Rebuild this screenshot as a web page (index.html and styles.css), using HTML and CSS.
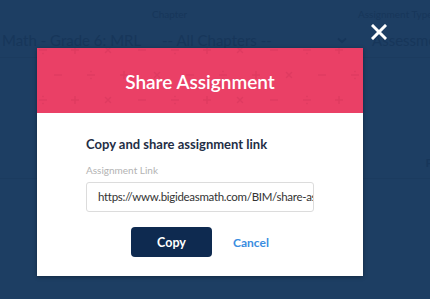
FILE: index.html
```html
<!DOCTYPE html>
<html lang="en">
<head>
    <meta charset="UTF-8">
    <meta name="viewport" content="width=device-width, initial-scale=1.0">
    <title>Share Assignment</title>
    <link rel="stylesheet" href="styles.css">
</head>
<body>

    <div class="page">
        <div class="filters">
            <div class="filter course">
                <span class="filter-label">&nbsp;</span>
                <div class="filter-select">
                    <span>Math - Grade 6: MRL</span>
                    <svg class="chev" width="10" height="7" viewBox="0 0 10 7"><path d="M1 1.5 L5 5 L9 1.5" fill="none" stroke="currentColor" stroke-width="1.8"/></svg>
                </div>
            </div>
            <div class="filter chapter">
                <span class="filter-label">Chapter</span>
                <div class="filter-select">
                    <span>-- All Chapters --</span>
                    <svg class="chev" width="10" height="7" viewBox="0 0 10 7"><path d="M1 1.5 L5 5 L9 1.5" fill="none" stroke="currentColor" stroke-width="1.8"/></svg>
                </div>
            </div>
            <div class="filter type">
                <span class="filter-label">Assignment Type</span>
                <div class="filter-select">
                    <span>Assessment</span>
                </div>
            </div>
        </div>
        <div class="list-row">
            <span class="list-head">P</span>
        </div>
    </div>

    <div class="overlay">
        <button class="close" aria-label="Close">
            <svg width="16" height="16" viewBox="0 0 16 16"><path d="M2 2 L14 14 M14 2 L2 14" stroke="#fff" stroke-width="3" stroke-linecap="square"/></svg>
        </button>

        <div class="modal">
            <div class="modal-head">
                <svg class="symbols" width="326" height="65">
                    <defs>
                        <pattern id="math" x="0" y="0" width="132" height="50" patternUnits="userSpaceOnUse">
                            <g stroke="#df3a60" stroke-width="1.5" fill="#df3a60">
                                <!-- row 1 : + x - / -->
                                <path d="M38 -2 v8 M34 2 h8"/>
                                <path d="M68 -1 l6 6 M74 -1 l-6 6"/>
                                <path d="M101 2 h8"/>
                                <path d="M2 2 h8"/>
                                <circle cx="6" cy="-1.5" r="0.9" stroke="none"/>
                                <circle cx="6" cy="5.5" r="0.9" stroke="none"/>
                                <!-- row 2 : - / + x -->
                                <path d="M17 27 h8"/>
                                <path d="M50 27 h8"/>
                                <circle cx="54" cy="23.5" r="0.9" stroke="none"/>
                                <circle cx="54" cy="30.5" r="0.9" stroke="none"/>
                                <path d="M87 23 v8 M83 27 h8"/>
                                <path d="M117 24 l6 6 M123 24 l-6 6"/>
                                <!-- wrap of row 1 -->
                                <path d="M38 48 v8 M34 52 h8"/>
                                <path d="M68 49 l6 6 M74 49 l-6 6"/>
                                <path d="M101 52 h8"/>
                                <path d="M2 52 h8"/>
                                <circle cx="6" cy="48.5" r="0.9" stroke="none"/>
                            </g>
                        </pattern>
                    </defs>
                    <rect width="326" height="65" fill="url(#math)"/>
                </svg>
                <h2>Share Assignment</h2>
            </div>
            <div class="modal-body">
                <h3>Copy and share assignment link</h3>
                <label class="field-label">Assignment Link</label>
                <div class="link-box">https://www.bigideasmath.com/BIM/share-assignment/8f21c</div>
                <div class="actions">
                    <button class="btn-copy">Copy</button>
                    <a class="btn-cancel" href="#">Cancel</a>
                </div>
            </div>
        </div>
    </div>

</body>
</html>
```

FILE: styles.css
```css
* {
    margin: 0;
    padding: 0;
    box-sizing: border-box;
}
body {
    width: 430px;
    height: 299px;
    overflow: hidden;
    background: #1d3e63;
    font-family: Lato, "Liberation Sans", sans-serif;
    position: relative;
}

/* page behind the dialog */
.page {
    color: #17365a;
    white-space: nowrap;
}
.filters {
    display: flex;
    padding: 7px 0 0 2px;
    height: 58px;
    border-bottom: 1px solid #1b3b5f;
}
.filter {
    display: flex;
    flex-direction: column;
}
.filter-label {
    font-size: 10px;
    height: 14px;
    line-height: 14px;
}
.filter-select {
    display: flex;
    align-items: center;
    font-size: 15px;
    height: 26px;
    margin-top: 6px;
}
.filter.course .filter-select {
    width: 134px;
    justify-content: space-between;
}
.filter.chapter {
    margin-left: 26px;
}
.filter.chapter .filter-label {
    margin-left: -10px;
}
.filter.chapter .filter-select {
    width: 185px;
    justify-content: space-between;
}
.filter.type {
    margin-left: 25px;
}
.filter.type .filter-label {
    margin-left: -14px;
}
.list-row {
    margin-top: 97px;
    height: 24px;
    border-bottom: 1px solid #1b3b5f;
    display: flex;
    justify-content: flex-end;
    overflow: hidden;
}
.list-head {
    font-size: 12px;
    font-weight: bold;
    margin-right: -3px;
}

/* dialog */
.overlay {
    position: absolute;
    left: 0;
    top: 0;
    width: 430px;
    height: 299px;
}
.close {
    position: absolute;
    left: 371px;
    top: 24px;
    background: none;
    border: 0;
    width: 16px;
    height: 16px;
}
.modal {
    position: absolute;
    left: 37px;
    top: 48px;
    width: 326px;
    background: #fff;
    box-shadow: 0 1px 4px rgba(0, 0, 0, 0.35);
}
.modal-head {
    height: 65px;
    background: #ea4066;
    position: relative;
    display: flex;
    align-items: center;
    justify-content: center;
}
.modal-head .symbols {
    position: absolute;
    left: 0;
    top: 0;
}
.modal-head h2 {
    position: relative;
    color: #fff;
    font-size: 19px;
    font-weight: 600;
    margin-top: 1px;
}
.modal-body {
    padding: 22px 49px 19px 49px;
    height: 163px;
}
.modal-body h3 {
    font-size: 13px;
    font-weight: bold;
    color: #1f2e45;
    line-height: 18px;
}
.field-label {
    display: block;
    margin-top: 11px;
    font-size: 10px;
    color: #b3b3b3;
    line-height: 13px;
}
.link-box {
    margin-top: 5px;
    height: 30px;
    border: 1px solid #dcdcdc;
    border-radius: 3px;
    padding: 0 0 0 11px;
    font-size: 11.5px;
    letter-spacing: -0.3px;
    line-height: 28px;
    color: #333;
    white-space: nowrap;
    overflow: hidden;
}
.actions {
    display: flex;
    align-items: center;
    margin-top: 15px;
    padding-left: 45px;
}
.btn-copy {
    width: 81px;
    height: 30px;
    border: 0;
    border-radius: 4px;
    background: #0e2a50;
    color: #fff;
    font-family: Lato, "Liberation Sans", sans-serif;
    font-size: 12.5px;
    font-weight: bold;
}
.btn-cancel {
    margin-left: 21px;
    color: #3a8de0;
    font-size: 12px;
    font-weight: bold;
    text-decoration: none;
}
```
